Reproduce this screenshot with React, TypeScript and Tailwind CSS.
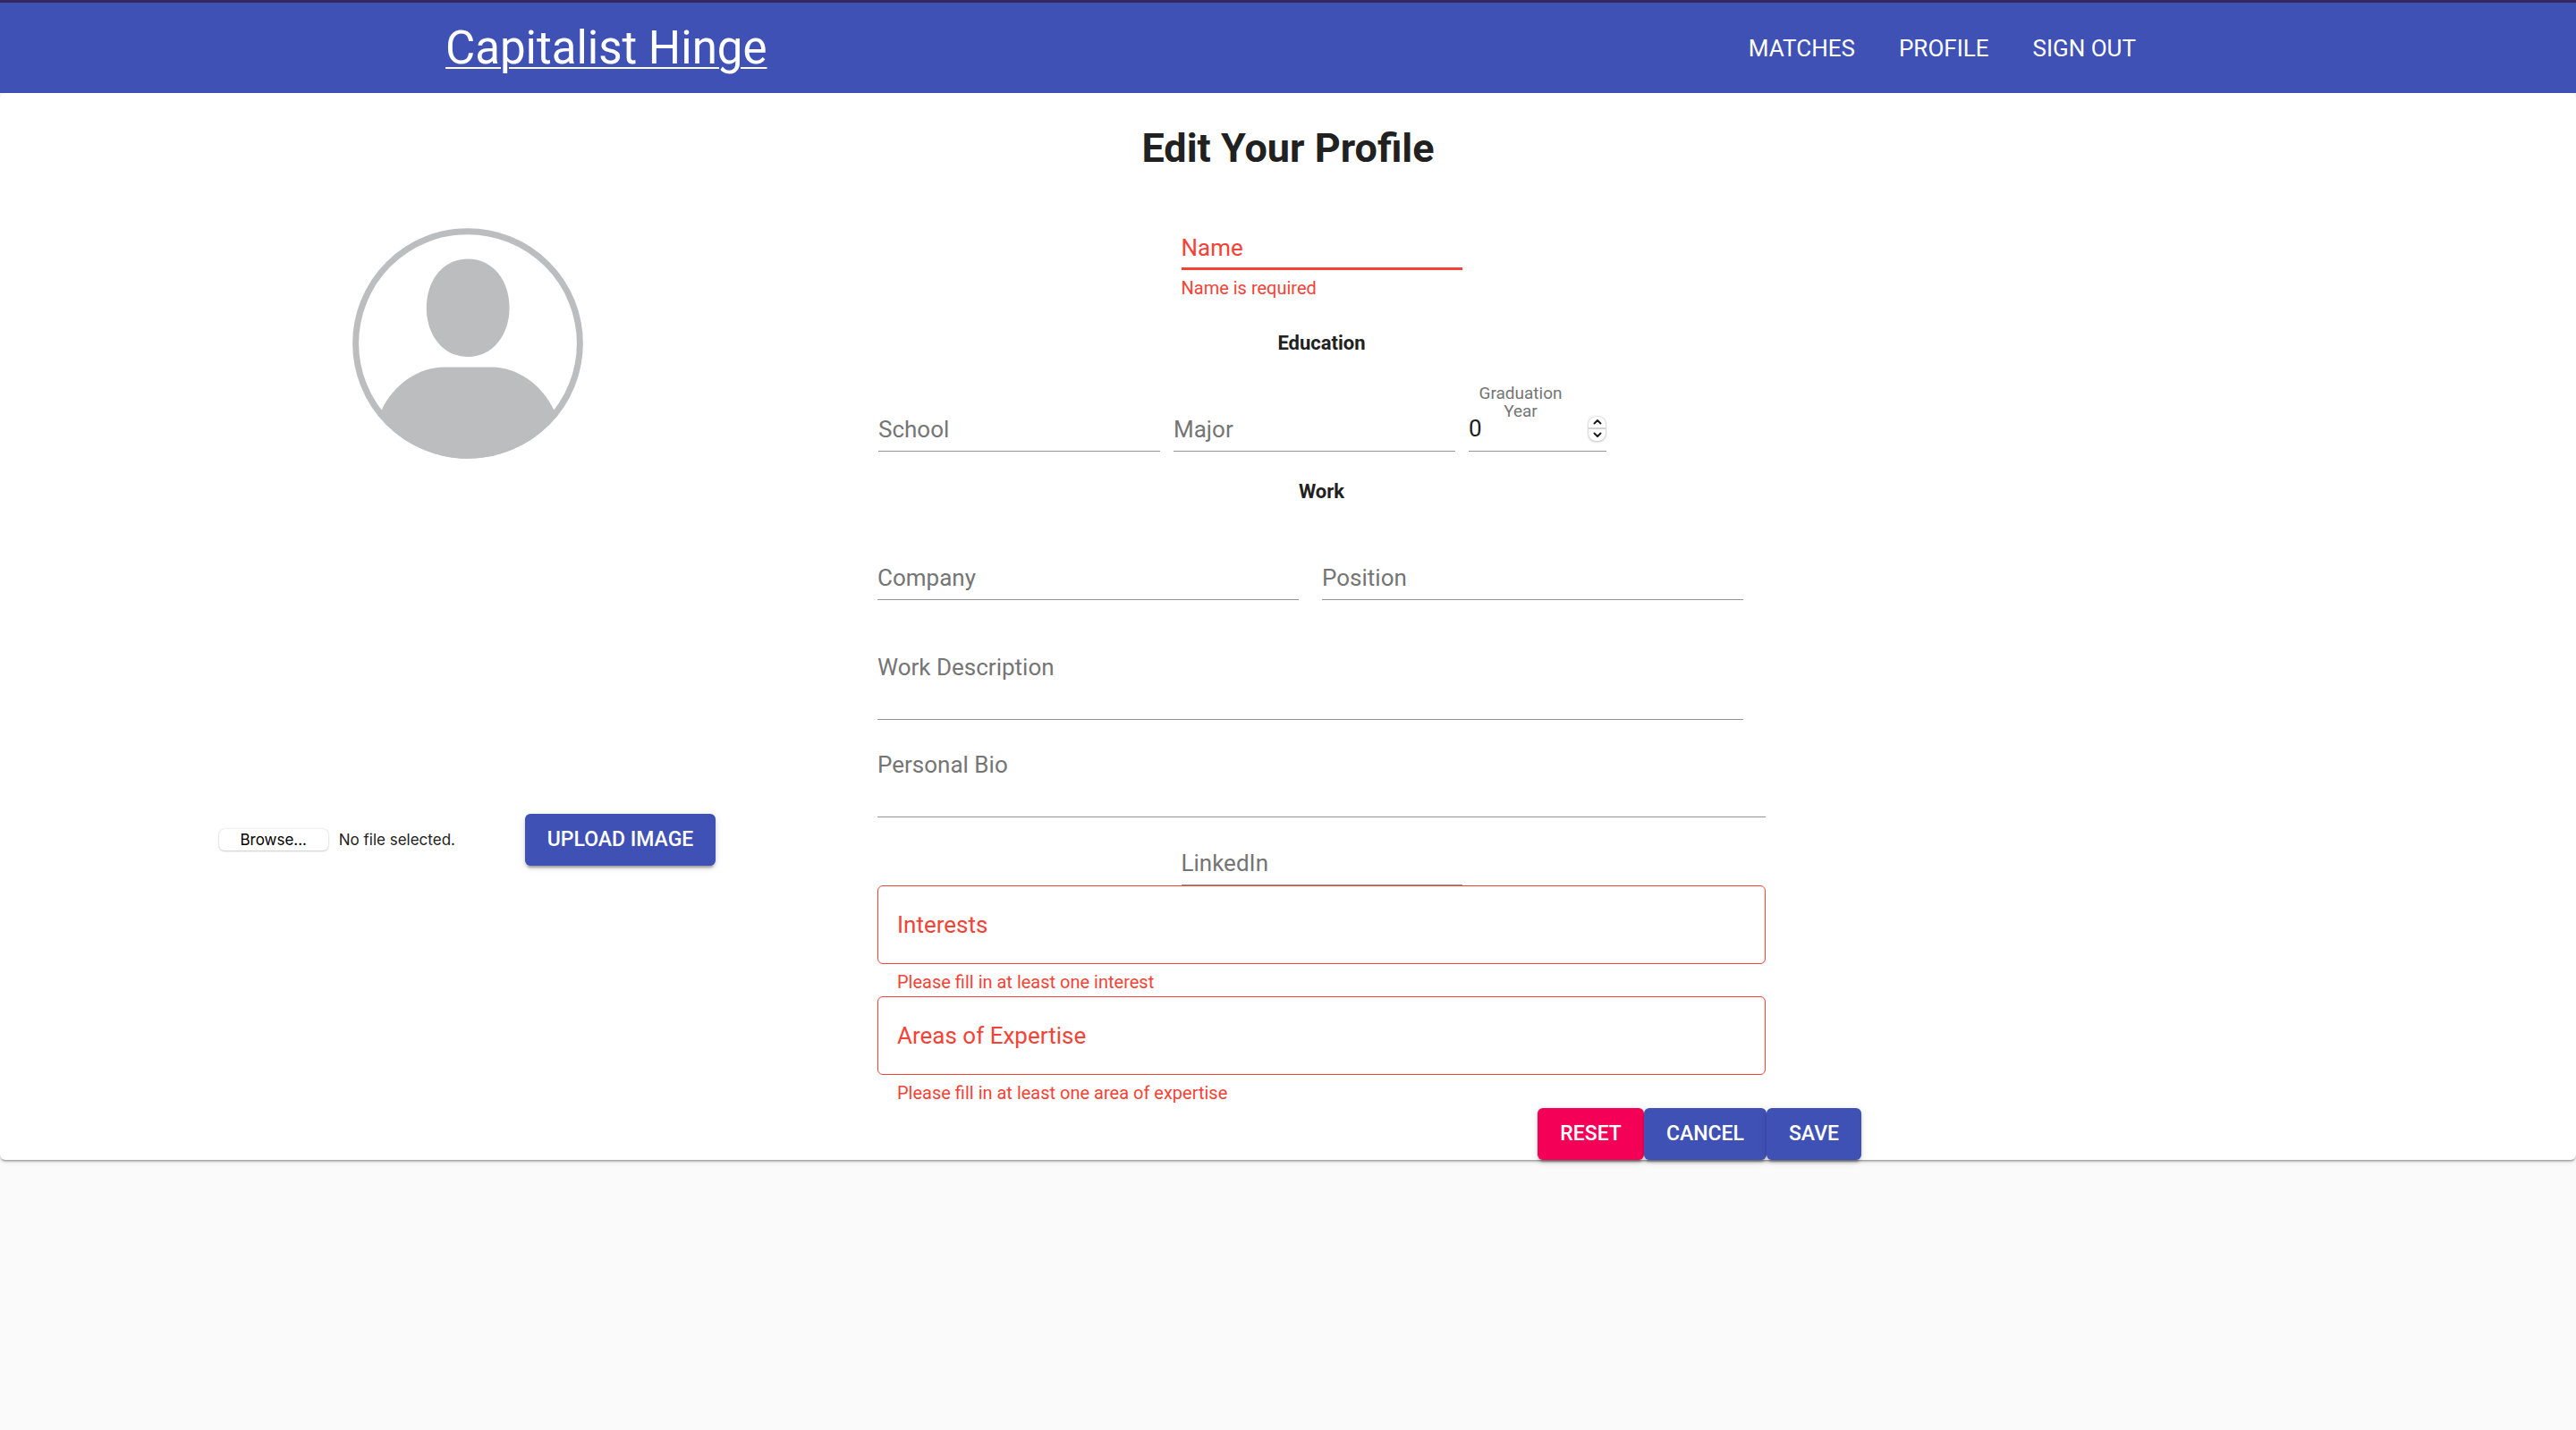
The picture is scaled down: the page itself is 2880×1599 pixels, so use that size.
import React, { useState } from "react";

const shadowButton =
  "shadow-[0_5px_2px_-3px_rgba(0,0,0,0.2),0_3px_3px_0_rgba(0,0,0,0.14),0_2px_8px_0_rgba(0,0,0,0.12)]";

function Button({ children, className = "bg-[#3f51b5]" }: { children: React.ReactNode; className?: string }) {
  return (
    <button
      type="button"
      className={`h-[58px] rounded-md px-[25px] text-[23px] font-medium uppercase leading-10 text-white ${shadowButton} ${className}`}
    >
      {children}
    </button>
  );
}

type FieldProps = { id: string; label: string; className?: string };

function TextField({ id, label, className = "" }: FieldProps) {
  return (
    <div className={`grid ${className}`}>
      <label htmlFor={id} className="pointer-events-none col-start-1 row-start-1 self-center text-[26px] leading-8 text-[#757575]">
        {label}
      </label>
      <input
        id={id}
        type="text"
        className="col-start-1 row-start-1 h-[51px] w-full min-w-0 border-b border-[#949494] bg-transparent text-[26px] outline-none"
      />
    </div>
  );
}

function TextArea({ id, label, className = "" }: FieldProps) {
  return (
    <div className={`grid ${className}`}>
      <label htmlFor={id} className="pointer-events-none col-start-1 row-start-1 pt-[9px] text-[26px] leading-8 text-[#757575]">
        {label}
      </label>
      <textarea
        id={id}
        className="col-start-1 row-start-1 h-[84px] w-full resize-none border-b border-[#949494] bg-transparent pt-[9px] text-[26px] leading-8 outline-none"
      />
    </div>
  );
}

function OutlinedField({ id, label, error }: FieldProps & { error: string }) {
  return (
    <div className="text-[#f44336]">
      <div className="grid">
        <label htmlFor={id} className="pointer-events-none col-start-1 row-start-1 self-center pl-[22px] text-[26px] leading-8">
          {label}
        </label>
        <input
          id={id}
          type="text"
          aria-invalid="true"
          aria-describedby={`${id}-error`}
          className="col-start-1 row-start-1 h-[88px] w-full rounded-md border border-[#f44336] bg-transparent px-[22px] text-[26px] outline-none"
        />
      </div>
      <p id={`${id}-error`} className="mt-1 pl-[22px] text-[20px] leading-8">
        {error}
      </p>
    </div>
  );
}

function Avatar() {
  return (
    <svg viewBox="38 44 776 776" className="size-[258px]" role="img" aria-label="Profile picture">
      <defs>
        <clipPath id="avatar-disc">
          <circle cx="426" cy="432" r="387" />
        </clipPath>
      </defs>
      <circle cx="426" cy="432" r="377" fill="#fff" stroke="#bbbdbf" strokeWidth="21" />
      <path
        d="M426 148C512 148 566 222 566 313C566 400 512 477 426 477C340 477 287 400 287 313C287 222 340 148 426 148Z"
        fill="#bbbdbf"
      />
      <path
        d="M136 657C176 570 262 512 345 512H508C590 512 676 570 716 657L760 700V830H90V700Z"
        fill="#bbbdbf"
        clipPath="url(#avatar-disc)"
      />
    </svg>
  );
}

function GraduationYear() {
  const [year, setYear] = useState(0);
  return (
    <div className="relative w-[154px]">
      <label
        htmlFor="graduation-year"
        className="pointer-events-none absolute -top-6 left-0 w-[116px] text-center text-[19px] leading-5 text-[#757575]"
      >
        Graduation Year
      </label>
      <div className="flex h-[51px] items-center border-b border-[#949494]">
        <input
          id="graduation-year"
          type="number"
          value={year}
          onChange={(e) => setYear(Number(e.target.value))}
          className="w-full min-w-0 appearance-none bg-transparent text-[26px] leading-8 text-[#212121] outline-none [-moz-appearance:textfield] [&::-webkit-inner-spin-button]:appearance-none"
        />
        <div className="mr-px flex h-[27px] w-[19px] shrink-0 flex-col divide-y-2 divide-[#d4d4d4] rounded-lg bg-white shadow-[0_0_2px_rgba(0,0,0,0.25),0_1px_3px_rgba(0,0,0,0.2)]">
          <button type="button" aria-label="Increase year" onClick={() => setYear(year + 1)} className="flex flex-1 items-center justify-center">
            <svg viewBox="0 0 10 7" className="h-[7px] w-[10px]" fill="none" stroke="#1d1d1d" strokeWidth="2" strokeLinecap="round" strokeLinejoin="round">
              <path d="M1.5 5.5L5 2L8.5 5.5" />
            </svg>
          </button>
          <button type="button" aria-label="Decrease year" onClick={() => setYear(year - 1)} className="flex flex-1 items-center justify-center">
            <svg viewBox="0 0 10 7" className="h-[7px] w-[10px]" fill="none" stroke="#1d1d1d" strokeWidth="2" strokeLinecap="round" strokeLinejoin="round">
              <path d="M1.5 1.5L5 5L8.5 1.5" />
            </svg>
          </button>
        </div>
      </div>
    </div>
  );
}

export default function App() {
  return (
    <div className="min-h-screen bg-[#fafafa] font-['Roboto',sans-serif] text-[#212121]">
      <header className="border-t-3 border-[#36275c] bg-[#3f51b5] text-white">
        <div className="mx-auto flex h-[101px] max-w-[1896px] items-center justify-between pl-1.5">
          <a href="#home" className="text-[51px] leading-[60px] underline decoration-2 underline-offset-4">
            Capitalist Hinge
          </a>
          <nav className="flex gap-[49px] text-[26px] uppercase leading-10">
            <a href="#matches">Matches</a>
            <a href="#profile">Profile</a>
            <a href="#sign-out">Sign out</a>
          </nav>
        </div>
      </header>

      <main className="rounded-md bg-white pt-8 shadow-[0_3px_2px_-2px_rgba(0,0,0,0.2),0_2px_2px_0_rgba(0,0,0,0.14),0_2px_5px_0_rgba(0,0,0,0.12)]">
        <h1 className="text-center text-[45px] font-bold leading-[60px]">Edit Your Profile</h1>

        <div className="grid grid-cols-[1fr_2fr]">
          <section aria-label="Profile picture" className="flex flex-col items-center pl-[85px] pt-[59px]">
            <Avatar />
            <div className="mt-[397px] flex items-center">
              <div className="flex w-[342px] items-center gap-3 font-['Inter',sans-serif] text-[17px] leading-6">
                <input id="profile-image" type="file" className="peer sr-only" />
                <label
                  htmlFor="profile-image"
                  className="w-[122px] rounded-md bg-white text-center text-black shadow-[0_0_2px_rgba(0,0,0,0.2),0_1px_2px_rgba(0,0,0,0.15)]"
                >
                  Browse...
                </label>
                <span>No file selected.</span>
              </div>
              <Button>Upload Image</Button>
            </div>
          </section>

          <form className="pl-[21px] pt-[55px]">
            <div className="max-w-[993px]">
              <div className="mx-auto w-[314px] text-[#f44336]">
                <div className="grid">
                  <label htmlFor="name" className="pointer-events-none col-start-1 row-start-1 self-center text-[26px] leading-8">
                    Name
                  </label>
                  <input
                    id="name"
                    type="text"
                    aria-invalid="true"
                    aria-describedby="name-error"
                    className="col-start-1 row-start-1 h-[51px] w-full border-b-3 border-[#f44336] bg-transparent text-[26px] outline-none"
                  />
                </div>
                <p id="name-error" className="mt-1 text-[20px] leading-8">
                  Name is required
                </p>
              </div>

              <h2 className="mt-[30px] text-center text-[22px] font-bold leading-8">Education</h2>
              <div className="mt-[54px] flex gap-[15px] pl-px">
                <TextField id="school" label="School" className="w-[315px]" />
                <TextField id="major" label="Major" className="w-[315px]" />
                <GraduationYear />
              </div>

              <h2 className="mt-[29px] text-center text-[22px] font-bold leading-8">Work</h2>
              <div className="mr-[25px]">
                <div className="mt-[54px] grid grid-cols-2 gap-[26px]">
                  <TextField id="company" label="Company" />
                  <TextField id="position" label="Position" />
                </div>
                <TextArea id="work-description" label="Work Description" className="mt-[50px]" />
              </div>
              <TextArea id="personal-bio" label="Personal Bio" className="mt-[25px]" />
              <TextField id="linkedin" label="LinkedIn" className="mx-auto mt-[25px] w-[314px]" />

              <OutlinedField id="interests" label="Interests" error="Please fill in at least one interest" />
              <OutlinedField id="expertise" label="Areas of Expertise" error="Please fill in at least one area of expertise" />
            </div>

            <div className="flex max-w-[1100px] justify-end pt-px">
              <Button className="bg-[#f50057]">Reset</Button>
              <Button>Cancel</Button>
              <Button>Save</Button>
            </div>
          </form>
        </div>
      </main>
    </div>
  );
}
